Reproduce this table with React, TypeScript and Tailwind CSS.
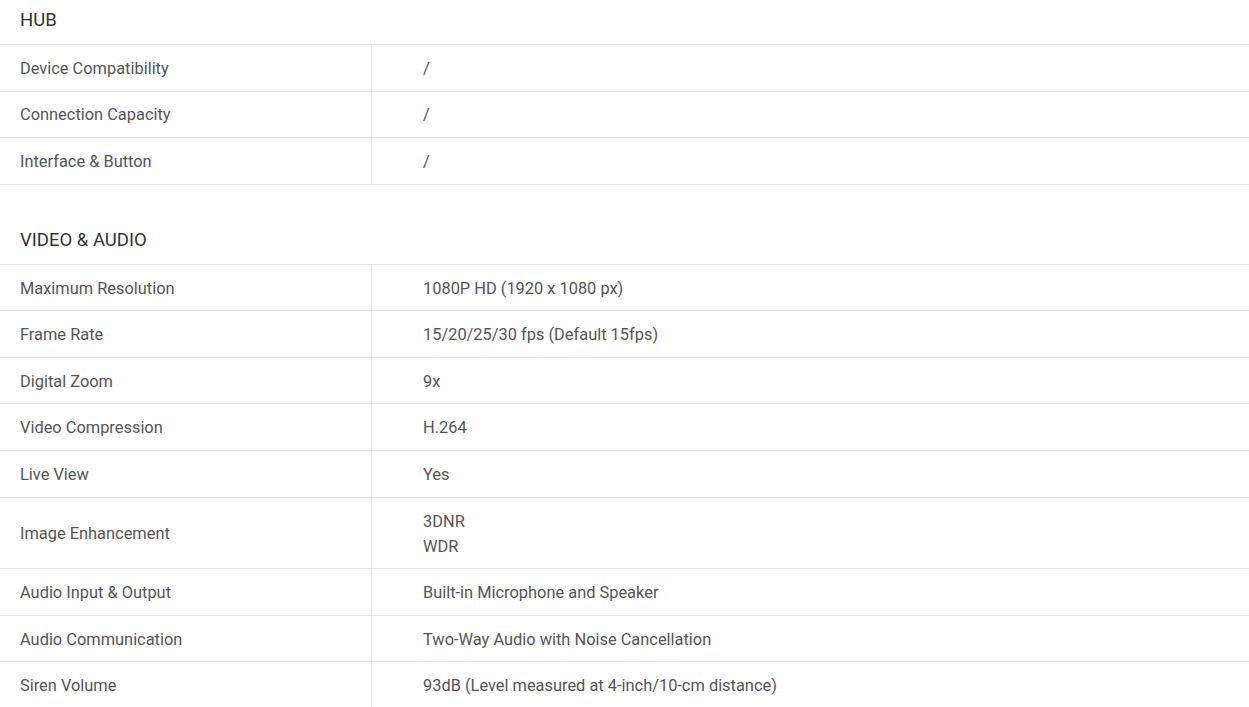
import React from "react";

type Row = { label: string; values: string[] };
type Section = { title: string; rows: Row[] };

const sections: Section[] = [
  {
    title: "HUB",
    rows: [
      { label: "Device Compatibility", values: ["/"] },
      { label: "Connection Capacity", values: ["/"] },
      { label: "Interface & Button", values: ["/"] },
    ],
  },
  {
    title: "VIDEO & AUDIO",
    rows: [
      { label: "Maximum Resolution", values: ["1080P HD (1920 x 1080 px)"] },
      { label: "Frame Rate", values: ["15/20/25/30 fps (Default 15fps)"] },
      { label: "Digital Zoom", values: ["9x"] },
      { label: "Video Compression", values: ["H.264"] },
      { label: "Live View", values: ["Yes"] },
      { label: "Image Enhancement", values: ["3DNR", "WDR"] },
      { label: "Audio Input & Output", values: ["Built-in Microphone and Speaker"] },
      { label: "Audio Communication", values: ["Two-Way Audio with Noise Cancellation"] },
      { label: "Siren Volume", values: ["93dB (Level measured at 4-inch/10-cm distance)"] },
    ],
  },
];

export default function App() {
  return (
    <div
      className="w-[1249px] h-[707px] overflow-hidden bg-white text-[#555555]"
      style={{ fontFamily: "Roboto, 'Liberation Sans', sans-serif" }}
    >
      {sections.map((s, i) => (
        <div key={s.title} className={i > 0 ? "mt-[35px]" : ""}>
          <div className="h-[44px] pl-[20px] pt-[8px] text-[18.5px] leading-[25px] text-[#333333]">
            {s.title}
          </div>
          <div className="border-b border-[#e6e6e6]">
            {s.rows.map((r) => (
              <div key={r.label} className="flex border-t border-[#e6e6e6] text-[16.4px] leading-[25px]">
                <div className="w-[372px] shrink-0 border-r border-[#e6e6e6] pl-[20px] pt-[10.9px] pb-[9.7px] flex items-center">
                  {r.label}
                </div>
                <div className="flex-1 pl-[51px] pt-[10.9px] pb-[9.7px] flex flex-col justify-center">
                  {r.values.map((v) => (
                    <div key={v}>{v}</div>
                  ))}
                </div>
              </div>
            ))}
          </div>
        </div>
      ))}
    </div>
  );
}
